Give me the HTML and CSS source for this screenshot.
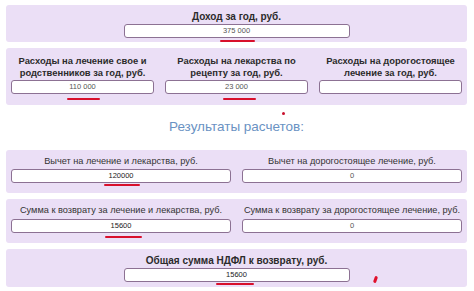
FILE: index.html
```html
<!DOCTYPE html>
<html lang="ru">
<head>
  <meta charset="UTF-8">
  <link rel="stylesheet" href="styles.css">
  <title>Налоговый вычет на лечение</title>
</head>
<body>
  <div class="calc">
    <div class="panel">
      <div class="field wide">
        <div class="label bold">Доход за год, руб.</div>
        <div class="input">375 000</div>
      </div>
    </div>

    <div class="panel cols3">
      <div class="field">
        <div class="label bold">Расходы на лечение свое и родственников за год, руб.</div>
        <div class="input">110 000</div>
      </div>
      <div class="field">
        <div class="label bold">Расходы на лекарства по рецепту за год, руб.</div>
        <div class="input">23 000</div>
      </div>
      <div class="field">
        <div class="label bold">Расходы на дорогостоящее лечение за год, руб.</div>
        <div class="input"></div>
      </div>
    </div>

    <h2 class="title">Результаты расчетов:</h2>

    <div class="panel cols2">
      <div class="field">
        <div class="label">Вычет на лечение и лекарства, руб.</div>
        <div class="input dark">120000</div>
      </div>
      <div class="field">
        <div class="label">Вычет на дорогостоящее лечение, руб.</div>
        <div class="input">0</div>
      </div>
    </div>

    <div class="panel cols2">
      <div class="field">
        <div class="label">Сумма к возврату за лечение и лекарства, руб.</div>
        <div class="input dark">15600</div>
      </div>
      <div class="field">
        <div class="label">Сумма к возврату за дорогостоящее лечение, руб.</div>
        <div class="input">0</div>
      </div>
    </div>

    <div class="panel last">
      <div class="field wide">
        <div class="label bold">Общая сумма НДФЛ к возврату, руб.</div>
        <div class="input dark">15600</div>
      </div>
    </div>

    <!-- пометки красным поверх -->
    <span class="mark" style="left:220px;top:40px;width:35px"></span>
    <span class="mark" style="left:67px;top:98px;width:33px"></span>
    <span class="mark" style="left:223px;top:98px;width:33px"></span>
    <span class="dot" style="left:282px;top:112px"></span>
    <span class="mark" style="left:104px;top:184px;width:36px"></span>
    <span class="mark" style="left:105px;top:236px;width:37px"></span>
    <span class="mark" style="left:216px;top:283px;width:38px"></span>
    <span class="tick" style="left:374px;top:276px"></span>
  </div>
</body>
</html>
```

FILE: styles.css
```css
* {
  margin: 0;
  padding: 0;
  box-sizing: border-box;
}

body {
  background-color: #fff;
  font-family: "Liberation Sans", Arial, sans-serif;
  color: #333;
}

.calc {
  position: relative;
  padding: 5px 7px 0 6px;
}

.panel {
  background-color: #ebdff6;
  border-radius: 3px;
  padding: 5px 5px 4px;
  margin-bottom: 6px;
}

.cols3 {
  display: grid;
  grid-template-columns: repeat(3, 1fr);
  column-gap: 11px;
  padding-top: 7px;
  padding-bottom: 11px;
}

.cols2 {
  display: grid;
  grid-template-columns: repeat(2, 1fr);
  column-gap: 11px;
  padding-bottom: 10px;
}

.field {
  display: flex;
  flex-direction: column;
  align-items: center;
}

.field.wide .input {
  width: 226px;
}

.label {
  font-size: 9.2px;
  line-height: 13px;
  text-align: center;
  color: #333;
  margin-bottom: 1px;
  white-space: nowrap;
}

.label.bold {
  font-weight: bold;
  font-size: 10px;
  color: #2b2b2b;
}

.cols3 .label {
  font-size: 9.4px;
  line-height: 12px;
  white-space: normal;
}

.cols2 + .cols2 .label {
  margin-bottom: 2px;
}

.input {
  width: 100%;
  height: 14px;
  border: 1px solid #8c7193;
  border-radius: 3px;
  background-color: #fff;
  font-size: 7.5px;
  line-height: 12px;
  text-align: center;
  color: #555;
}

.input.dark {
  color: #222;
}

.title {
  font-weight: normal;
  font-size: 13.5px;
  line-height: 16px;
  color: #6a92c3;
  text-align: center;
  margin: 14px 0 15px;
}

.last {
  padding-bottom: 5px;
}

.mark {
  position: absolute;
  height: 2px;
  background-color: #d8102c;
  border-radius: 1px;
}

.dot {
  position: absolute;
  width: 3px;
  height: 3px;
  border-radius: 50%;
  background-color: #c8102c;
}

.tick {
  position: absolute;
  width: 3px;
  height: 7px;
  border-radius: 2px;
  background-color: #e0102c;
  transform: rotate(20deg);
}
```
